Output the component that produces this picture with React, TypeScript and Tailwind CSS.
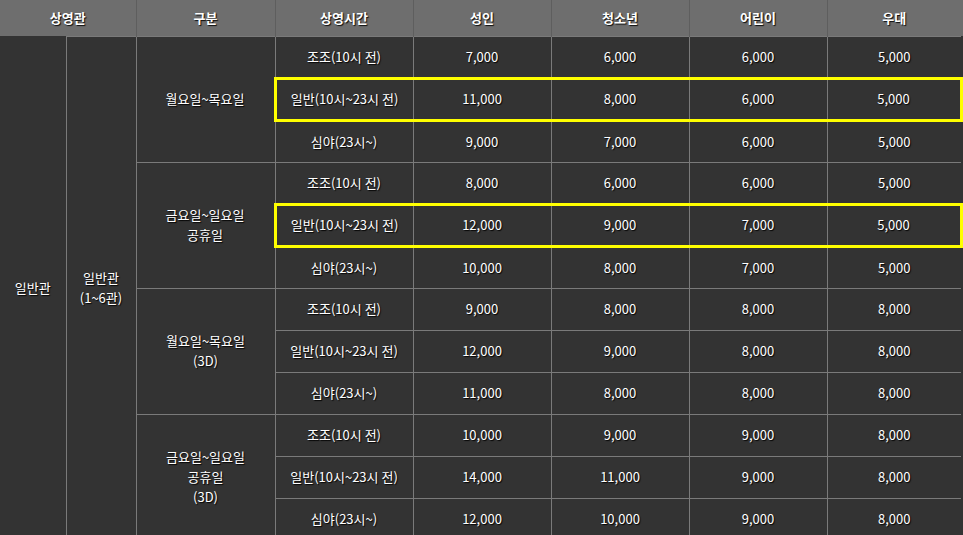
type Row = { time: string; prices: string[]; hot?: boolean };
type Group = { label: string[]; rows: Row[] };

const groups: Group[] = [
  {
    label: ["월요일~목요일"],
    rows: [
      { time: "조조(10시 전)", prices: ["7,000", "6,000", "6,000", "5,000"] },
      { time: "일반(10시~23시 전)", prices: ["11,000", "8,000", "6,000", "5,000"], hot: true },
      { time: "심야(23시~)", prices: ["9,000", "7,000", "6,000", "5,000"] },
    ],
  },
  {
    label: ["금요일~일요일", "공휴일"],
    rows: [
      { time: "조조(10시 전)", prices: ["8,000", "6,000", "6,000", "5,000"] },
      { time: "일반(10시~23시 전)", prices: ["12,000", "9,000", "7,000", "5,000"], hot: true },
      { time: "심야(23시~)", prices: ["10,000", "8,000", "7,000", "5,000"] },
    ],
  },
  {
    label: ["월요일~목요일", "(3D)"],
    rows: [
      { time: "조조(10시 전)", prices: ["9,000", "8,000", "8,000", "8,000"] },
      { time: "일반(10시~23시 전)", prices: ["12,000", "9,000", "8,000", "8,000"] },
      { time: "심야(23시~)", prices: ["11,000", "8,000", "8,000", "8,000"] },
    ],
  },
  {
    label: ["금요일~일요일", "공휴일", "(3D)"],
    rows: [
      { time: "조조(10시 전)", prices: ["10,000", "9,000", "9,000", "8,000"] },
      { time: "일반(10시~23시 전)", prices: ["14,000", "11,000", "9,000", "8,000"] },
      { time: "심야(23시~)", prices: ["12,000", "10,000", "9,000", "8,000"] },
    ],
  },
];

const headers = ["구분", "상영시간", "성인", "청소년", "어린이", "우대"];

const cell = "border border-[#7a7a7a] text-center align-middle";

// price cell classes: last column has no outer line unless it's a highlighted row
const priceClass = (hot: boolean | undefined, last: boolean) => {
  if (hot && last)
    return "border-y-[3px] border-r-[3px] border-l border-[#ffff00] border-l-[#7a7a7a] text-center align-middle";
  if (hot)
    return "border-y-[3px] border-x border-y-[#ffff00] border-x-[#7a7a7a] text-center align-middle";
  if (last) return "border border-r-0 border-[#7a7a7a] text-center align-middle";
  return cell;
};

export default function App() {
  return (
    <div className="w-[963px] h-[535px] overflow-hidden bg-[#333333] font-['Malgun_Gothic','Noto_Sans_CJK_KR',sans-serif] text-[13px] leading-[20px] text-white [text-shadow:1px_1px_1px_rgba(0,0,0,0.9)]">
      <table className="w-[961px] table-fixed border-collapse">
        <colgroup>
          <col className="w-[66px]" />
          <col className="w-[70px]" />
          <col className="w-[139px]" />
          <col className="w-[138px]" />
          <col className="w-[138px]" />
          <col className="w-[138px]" />
          <col className="w-[138px]" />
          <col className="w-[134px]" />
        </colgroup>
        <thead>
          <tr className="h-[36px] bg-[#6e6e6e]">
            <th colSpan={2} className="border-x border-l-0 border-[#5e5e5e] font-bold">
              상영관
            </th>
            {headers.map((h, i) => (
              <th
                key={h}
                className={
                  i === headers.length - 1
                    ? "border-l border-[#5e5e5e] font-bold shadow-[3px_0_0_#6e6e6e]"
                    : "border-x border-[#5e5e5e] font-bold"
                }
              >
                {h}
              </th>
            ))}
          </tr>
        </thead>
        <tbody>
          {groups.map((g, gi) =>
            g.rows.map((r, ri) => (
              <tr key={`${gi}-${ri}`} className="h-[42px]">
                {gi === 0 && ri === 0 && (
                  <>
                    <td rowSpan={12} className="border-r border-[#7a7a7a] text-center align-middle">
                      일반관
                    </td>
                    <td rowSpan={12} className={cell}>
                      일반관
                      <br />
                      (1~6관)
                    </td>
                  </>
                )}
                {ri === 0 && (
                  <td rowSpan={3} className={cell}>
                    {g.label.map((l, li) => (
                      <div key={li}>{l}</div>
                    ))}
                  </td>
                )}
                <td
                  className={
                    r.hot
                      ? "border-[3px] border-r border-[#ffff00] border-r-[#7a7a7a] text-center align-middle"
                      : cell
                  }
                >
                  {r.time}
                </td>
                {r.prices.map((p, pi) => (
                  <td key={pi} className={priceClass(r.hot, pi === 3)}>
                    {p}
                  </td>
                ))}
              </tr>
            ))
          )}
        </tbody>
      </table>
    </div>
  );
}
